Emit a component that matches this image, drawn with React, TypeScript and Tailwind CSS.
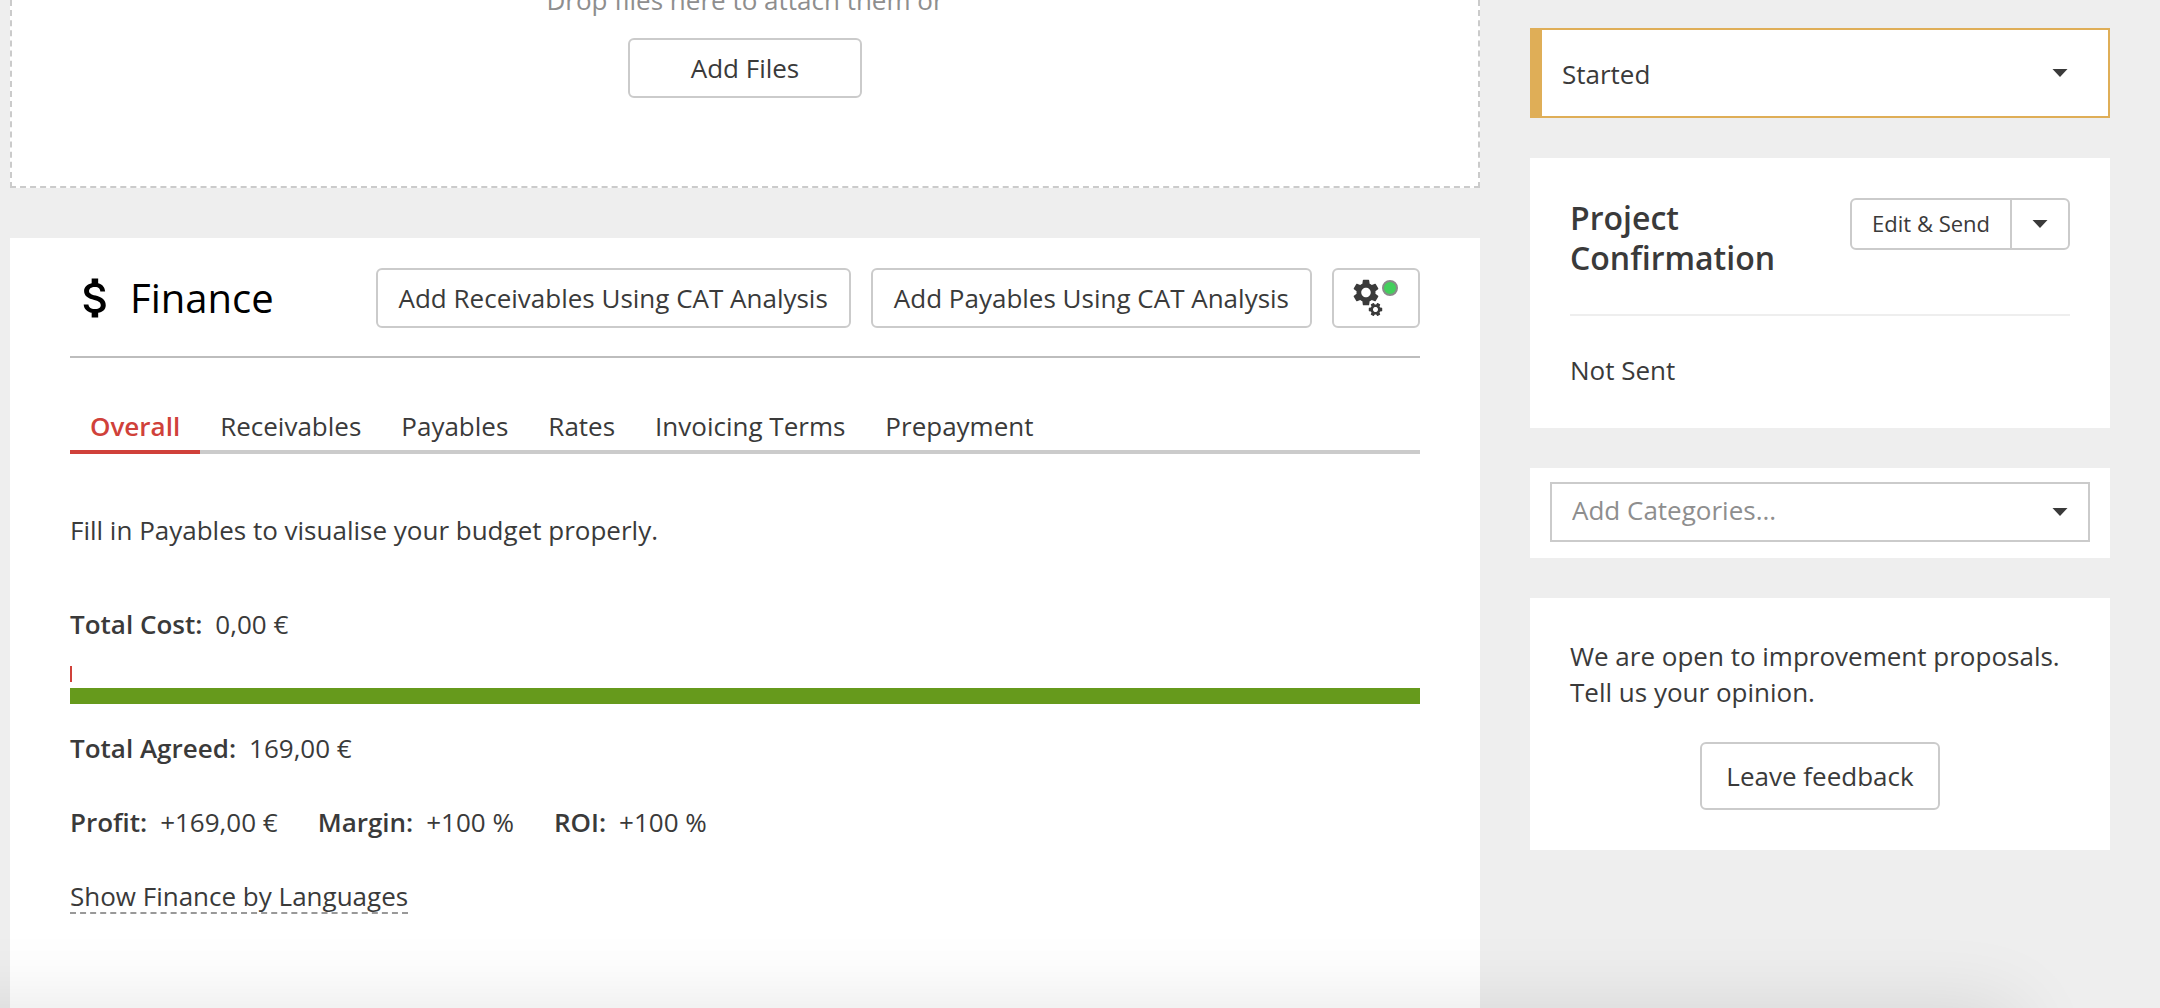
import { useState } from "react";
import type { ReactNode } from "react";

const GEAR =
  "M19.14 12.94c.04-.3.06-.61.06-.94 0-.32-.02-.64-.07-.94l2.03-1.58a.49.49 0 0 0 .12-.61l-1.92-3.32a.488.488 0 0 0-.59-.22l-2.39.96c-.5-.38-1.03-.7-1.62-.94l-.36-2.54a.484.484 0 0 0-.48-.41h-3.84c-.24 0-.43.17-.47.41l-.36 2.54c-.59.24-1.13.57-1.62.94l-2.39-.96c-.22-.08-.47 0-.59.22L2.74 8.87c-.12.21-.08.47.12.61l2.03 1.58c-.05.3-.09.63-.09.94s.02.64.07.94l-2.03 1.58a.49.49 0 0 0-.12.61l1.92 3.32c.12.22.37.29.59.22l2.39-.96c.5.38 1.03.7 1.62.94l.36 2.54c.05.24.24.41.48.41h3.84c.24 0 .44-.17.47-.41l.36-2.54c.59-.24 1.13-.56 1.62-.94l2.39.96c.22.08.47 0 .59-.22l1.92-3.32c.12-.22.07-.47-.12-.61l-2.01-1.58zM12 15.6c-1.98 0-3.6-1.62-3.6-3.6s1.62-3.6 3.6-3.6 3.6 1.62 3.6 3.6-1.62 3.6-3.6 3.6z";

function Caret() {
  return (
    <svg className="pointer-events-none h-2 w-4" viewBox="0 0 16 8" fill="#3a3a3a" aria-hidden="true">
      <path d="M0.5 0h15L8 8z" />
    </svg>
  );
}

function DollarIcon() {
  return (
    <svg className="size-[52px]" viewBox="0 0 24 24" fill="#000" aria-hidden="true">
      <path d="M11.8 10.9c-2.27-.59-3-1.2-3-2.15 0-1.09 1.01-1.85 2.7-1.85 1.78 0 2.44.85 2.5 2.1h2.21c-.07-1.72-1.12-3.3-3.21-3.81V3h-3v2.16c-1.94.42-3.5 1.68-3.5 3.61 0 2.31 1.91 3.46 4.7 4.13 2.5.6 3 1.48 3 2.41 0 .69-.49 1.79-2.7 1.79-2.06 0-2.87-.92-2.98-2.1h-2.2c.12 2.19 1.76 3.42 3.68 3.83V21h3v-2.15c1.95-.37 3.5-1.5 3.5-3.55 0-2.84-2.43-3.81-4.7-4.4z" />
    </svg>
  );
}

function GearsIcon() {
  return (
    <svg className="h-10 w-12" viewBox="0 0 48 40" fill="#3a3a3a" aria-hidden="true">
      <path d={GEAR} transform="translate(14 14.5) scale(1.32) translate(-12 -12)" />
      <path d={GEAR} transform="translate(23.5 31.5) rotate(30) scale(0.7) translate(-12 -12)" />
      <circle cx="38" cy="10" r="7" fill="#43cf5c" stroke="#8a8a8a" strokeWidth="2" />
    </svg>
  );
}

function Button({ className = "", children, label }: { className?: string; children: ReactNode; label?: string }) {
  return (
    <button
      type="button"
      aria-label={label}
      className={`flex items-center justify-center rounded-md border-2 border-[#cbcbcb] bg-white whitespace-nowrap ${className}`}
    >
      {children}
    </button>
  );
}

function Stat({ label, value }: { label: string; value: string }) {
  return (
    <p className="flex gap-[13px]">
      <span className="font-semibold">{label}</span>
      <span>{value}</span>
    </p>
  );
}

const tabs = ["Overall", "Receivables", "Payables", "Rates", "Invoicing Terms", "Prepayment"];

function Finance() {
  const [active, setActive] = useState("Overall");
  return (
    <section className="flex-1 bg-white px-[60px] pt-[30px] pb-10">
      <header className="flex items-center justify-between border-b-2 border-[#bdbdbd] pb-7">
        <h2 className="flex items-center gap-2 text-[40px] leading-[52px] text-black">
          <DollarIcon />
          Finance
        </h2>
        <div className="flex gap-5">
          <Button className="h-[60px] px-[21px]">Add Receivables Using CAT Analysis</Button>
          <Button className="h-[60px] px-[21px]">Add Payables Using CAT Analysis</Button>
          <Button className="h-[60px] w-[88px]" label="Finance settings">
            <GearsIcon />
          </Button>
        </div>
      </header>

      <div role="tablist" className="mt-[50px] flex bg-[linear-gradient(#cbcbcb,#cbcbcb)] bg-[length:100%_4px] bg-bottom bg-no-repeat">
        {tabs.map((tab) => (
          <button
            key={tab}
            type="button"
            role="tab"
            aria-selected={tab === active}
            onClick={() => setActive(tab)}
            className={
              tab === active
                ? "border-b-4 border-[#d0413a] px-5 pb-1.5 font-semibold text-[#d0413a]"
                : "border-b-4 border-transparent px-5 pb-1.5"
            }
          >
            {tab}
          </button>
        ))}
      </div>

      <p className="mt-[58px]">Fill in Payables to visualise your budget properly.</p>

      <div className="mt-[58px]">
        <Stat label="Total Cost:" value="0,00 €" />
        <div className="mt-6 h-4 w-0.5 bg-[#d0413a]" />
        <div className="mt-1.5 mb-[26px] h-4 bg-[#669a1c]" />
        <Stat label="Total Agreed:" value="169,00 €" />
      </div>

      <div className="mt-[38px] flex gap-10">
        <Stat label="Profit:" value="+169,00 €" />
        <Stat label="Margin:" value="+100 %" />
        <Stat label="ROI:" value="+100 %" />
      </div>

      <a href="#languages" className="mt-[38px] inline-block h-9 border-b-2 border-dashed border-[#999]">
        Show Finance by Languages
      </a>
    </section>
  );
}

function Sidebar() {
  return (
    <aside className="flex w-[580px] shrink-0 flex-col gap-10 pt-7">
      <div className="relative flex items-center">
        <select
          aria-label="Project status"
          className="h-[90px] w-full appearance-none border-2 border-l-12 border-[#dfae57] bg-white pt-0.5 pl-5 outline-none"
        >
          <option>Started</option>
          <option>Finished</option>
        </select>
        <span className="pointer-events-none absolute right-[42px]">
          <Caret />
        </span>
      </div>

      <section className="bg-white p-10">
        <header className="flex items-start justify-between border-b-2 border-[#eee] pb-9">
          <h3 className="w-60 text-[32px] leading-10 font-semibold">Project Confirmation</h3>
          <div className="flex h-[52px] rounded-md border-2 border-[#cbcbcb] text-[22px]">
            <button type="button" className="border-r-2 border-[#cbcbcb] px-5 pb-0.5">
              Edit &amp; Send
            </button>
            <button type="button" aria-label="More send options" className="px-5">
              <Caret />
            </button>
          </div>
        </header>
        <p className="mt-9">Not Sent</p>
      </section>

      <div className="bg-white px-5 pt-3.5 pb-4">
        <div className="relative flex items-center">
          <select
            aria-label="Add categories"
            className="h-[60px] w-full appearance-none border-2 border-[#cbcbcb] bg-white pb-1 pl-5 text-[#8e8e8e] outline-none"
          >
            <option>Add Categories...</option>
          </select>
          <span className="pointer-events-none absolute right-[22px]">
            <Caret />
          </span>
        </div>
      </div>

      <section className="flex flex-col bg-white p-10">
        <p>
          We are open to improvement proposals.
          <br />
          Tell us your opinion.
        </p>
        <Button className="mt-8 h-[68px] self-center px-6">Leave feedback</Button>
      </section>
    </aside>
  );
}

export default function App() {
  return (
    <div className="relative flex min-h-screen gap-[50px] overflow-hidden bg-[#eee] pr-[50px] pl-2.5 font-['Open_Sans','Noto_Sans',sans-serif] text-[26px] leading-9 text-[#3a3a3a]">
      <main className="flex min-w-0 flex-1 flex-col gap-[50px]">
        <section className="flex flex-col items-center border-2 border-t-0 border-dashed border-[#cbcbcb] bg-white pb-[88px]">
          <p className="-mt-[18px] text-[#8e8e8e]">Drop files here to attach them or</p>
          <Button className="mt-5 h-[60px] w-[234px]">Add Files</Button>
        </section>
        <Finance />
      </main>
      <Sidebar />
      <div className="pointer-events-none absolute top-full right-36 -left-40 h-40 shadow-[0_0_80px_rgba(0,0,0,0.11)]" />
    </div>
  );
}
